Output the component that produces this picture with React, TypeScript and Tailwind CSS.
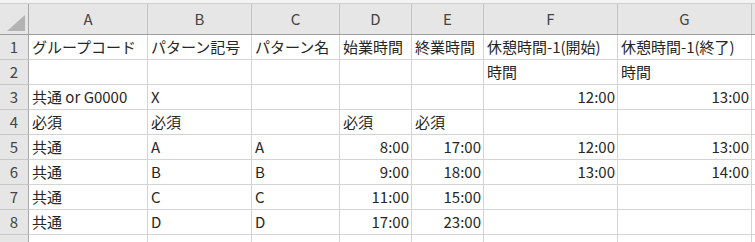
import React from 'react';

const columns = ['A', 'B', 'C', 'D', 'E', 'F', 'G'];

const rows: string[][] = [
  ['グループコード', 'パターン記号', 'パターン名', '始業時間', '終業時間', '休憩時間-1(開始)', '休憩時間-1(終了)'],
  ['', '', '', '', '', '時間', '時間'],
  ['共通 or G0000', 'X', '', '', '', '12:00', '13:00'],
  ['必須', '必須', '', '必須', '必須', '', ''],
  ['共通', 'A', 'A', '8:00', '17:00', '12:00', '13:00'],
  ['共通', 'B', 'B', '9:00', '18:00', '13:00', '14:00'],
  ['共通', 'C', 'C', '11:00', '15:00', '', ''],
  ['共通', 'D', 'D', '17:00', '23:00', '', ''],
  ['', '', '', '', '', '', ''],
];

// times sit on the right like Excel numbers
const isTime = (v: string) => /^\d+:\d\d$/.test(v);

const grid = 'grid grid-cols-[29px_119px_104px_88px_72px_72px_134px_134px_1fr]';

export default function App() {
  return (
    <div className="w-[755px] h-[242px] overflow-hidden bg-white font-['Noto_Sans_CJK_JP',sans-serif] text-[15px] text-[#262626]">
      <div className="h-[4px] bg-[#f3f3f3] border-b border-[#cfcfcf]" />

      {/* column letters */}
      <div className={`${grid} h-[31px] bg-[#e6e6e6] border-b border-[#9f9f9f]`}>
        <div className="relative border-r border-[#a8a8a8]">
          <svg className="absolute left-[7px] top-[11px]" width="18" height="16" viewBox="0 0 18 16">
            <polygon points="0,16 18,0 18,16" fill="#b3b3b3" />
          </svg>
        </div>
        {columns.map(c => (
          <div key={c} className="flex items-center justify-center border-r border-[#c4c4c4] text-[#444]">
            {c}
          </div>
        ))}
        <div />
      </div>

      {rows.map((row, i) => (
        <div key={i} className={`${grid} h-[25px]`}>
          <div className="flex items-center justify-center bg-[#e6e6e6] border-r border-b border-r-[#a8a8a8] border-b-[#c8c8c8] text-[#444]">
            {i < 8 ? i + 1 : ''}
          </div>
          {row.map((v, j) => (
            <div
              key={j}
              className={`flex items-center whitespace-nowrap overflow-hidden border-r border-b border-[#d4d4d4] ${
                isTime(v) ? 'justify-end pr-[2px]' : 'pl-[3px]'
              }`}
            >
              {v}
            </div>
          ))}
          <div className="border-b border-[#d4d4d4]" />
        </div>
      ))}
    </div>
  );
}
